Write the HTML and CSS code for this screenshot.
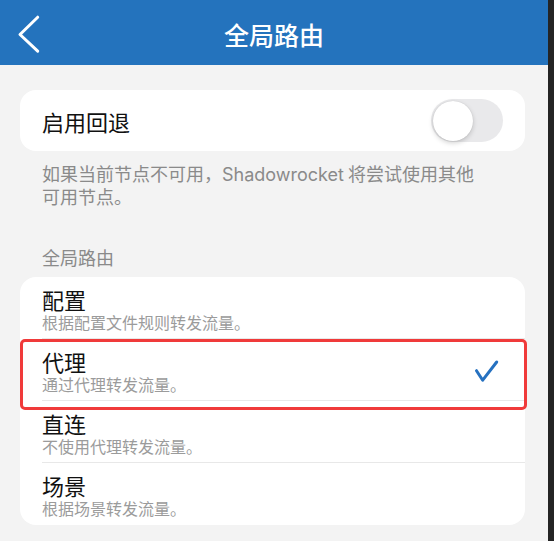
FILE: index.html
```html
<!DOCTYPE html>
<html lang="zh-CN">
<head>
    <meta charset="UTF-8">
    <meta name="viewport" content="width=device-width, initial-scale=1.0">
    <title>全局路由</title>
    <link rel="stylesheet" href="styles.css">
</head>
<body>
    <div class="app">
        <header class="navbar">
            <button class="back" aria-label="返回">
                <svg width="24" height="38" viewBox="0 0 24 38">
                    <path d="M19.7 3.2 L2 20.5 L19.7 37.2" fill="none" stroke="#fff" stroke-width="3" stroke-linecap="round" stroke-linejoin="round"/>
                </svg>
            </button>
            <h1 class="title">全局路由</h1>
            <span></span>
        </header>

        <main class="content">
            <div class="card switch-row">
                <span class="label">启用回退</span>
                <div class="toggle"><div class="knob"></div></div>
            </div>
            <p class="footer-note">如果当前节点不可用，<span class="latin">Shadowrocket</span> 将尝试使用其他<br>可用节点。</p>

            <div class="section-title">全局路由</div>
            <div class="card options">
                <div class="option">
                    <div class="option-body">
                        <div>
                            <div class="option-name">配置</div>
                            <div class="option-desc">根据配置文件规则转发流量。</div>
                        </div>
                    </div>
                </div>
                <div class="option selected">
                    <div class="option-body">
                        <div>
                            <div class="option-name">代理</div>
                            <div class="option-desc">通过代理转发流量。</div>
                        </div>
                        <svg class="check" width="28" height="24" viewBox="0 0 28 24">
                            <path d="M1.5 11.7 L7.7 21.2 L21.7 3" fill="none" stroke="#2671c0" stroke-width="3" stroke-linecap="round" stroke-linejoin="round"/>
                        </svg>
                    </div>
                    <div class="highlight"></div>
                </div>
                <div class="option">
                    <div class="option-body">
                        <div>
                            <div class="option-name">直连</div>
                            <div class="option-desc">不使用代理转发流量。</div>
                        </div>
                    </div>
                </div>
                <div class="option">
                    <div class="option-body">
                        <div>
                            <div class="option-name">场景</div>
                            <div class="option-desc">根据场景转发流量。</div>
                        </div>
                    </div>
                </div>
            </div>
        </main>
    </div>
</body>
</html>
```

FILE: styles.css
```css
body {
    margin: 0;
    background: #242424;
    font-family: "Noto Sans CJK SC", "Noto Sans", sans-serif;
    color: #111;
}
.app {
    width: 548px;
    min-height: 100vh;
    background: #f3f3f3;
}
.navbar {
    height: 65px;
    background: #2473bd;
    display: grid;
    grid-template-columns: 60px 1fr 60px;
    align-items: center;
}
.back {
    background: none;
    border: none;
    padding: 0 0 0 18px;
    height: 38px;
    display: flex;
    cursor: pointer;
}
.back svg {
    overflow: visible;
}
.title {
    margin: 3px 0 0 0;
    text-align: center;
    color: #fff;
    font-size: 25px;
    font-weight: 500;
    line-height: 30px;
}
.content {
    padding: 25px 23px 0 20px;
}
.card {
    background: #fff;
    border-radius: 16px;
}
.switch-row {
    height: 61px;
    padding: 0 22px;
    display: flex;
    align-items: center;
    justify-content: space-between;
}
.label {
    font-size: 22px;
    line-height: 26px;
}
.toggle {
    width: 72px;
    height: 43px;
    border-radius: 22px;
    background: #e9e9eb;
    display: flex;
    align-items: center;
    padding: 0 1.5px;
    box-sizing: border-box;
}
.knob {
    width: 40px;
    height: 40px;
    border-radius: 50%;
    background: #fff;
    box-shadow: 0 2px 5px rgba(0, 0, 0, 0.18), 0 0 1px rgba(0, 0, 0, 0.15);
}
.footer-note {
    margin: 11px 0 0 0;
    padding-left: 22px;
    font-size: 18px;
    line-height: 22.5px;
    color: #8a8a8a;
}
.latin {
    font-family: Inter, "Noto Sans", sans-serif;
    line-height: 1;
}
.section-title {
    margin-top: 39px;
    padding-left: 22px;
    font-size: 18px;
    line-height: 22px;
    color: #8a8a8a;
    margin-bottom: 9px;
}
.option {
    padding-left: 22px;
    position: relative;
}
.option-body {
    padding: 9px 22px 6px 0;
    border-bottom: 1px solid #e8e8e8;
    display: flex;
    align-items: center;
    justify-content: space-between;
}
.option:last-child .option-body {
    border-bottom-color: transparent;
}
.option-name {
    font-size: 22px;
    line-height: 26px;
}
.option-desc {
    font-size: 16px;
    line-height: 20px;
    color: #9b9b9b;
}
.check {
    overflow: visible;
}
.highlight {
    position: absolute;
    top: 0;
    left: 0;
    right: -2px;
    height: 71px;
    border: 3px solid #f03a3a;
    border-radius: 5px;
    box-sizing: border-box;
    pointer-events: none;
}
```
